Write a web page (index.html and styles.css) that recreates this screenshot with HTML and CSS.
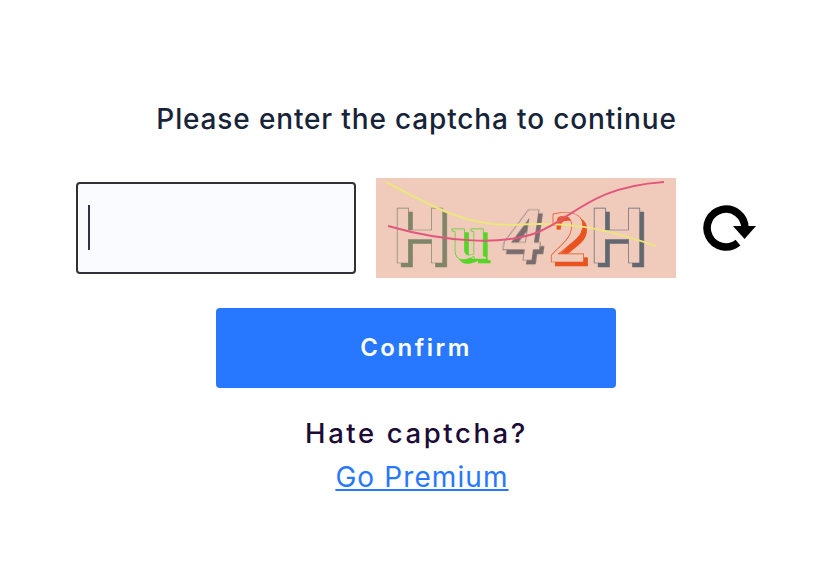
FILE: index.html
```html
<!DOCTYPE html>
<html lang="en">
<head>
<meta charset="utf-8">
<title>Captcha</title>
<link rel="stylesheet" href="styles.css">
</head>
<body>
<main class="panel">
  <h1 class="title"><span>Please enter the captcha to continue</span></h1>
  <div class="row">
    <div class="field" role="textbox"><span class="caret"></span></div>
    <svg class="captcha" width="300" height="100" viewBox="0 0 300 100">
      <text class="glyph olive" x="16" y="85" textLength="56" lengthAdjust="spacingAndGlyphs" font-size="79">H</text>
      <text class="glyph serif green" x="75" y="81" textLength="37" lengthAdjust="spacingAndGlyphs" font-size="66">u</text>
      <text class="glyph taupe" transform="translate(12) skewX(-8)" x="124" y="82" textLength="38" lengthAdjust="spacingAndGlyphs" font-size="73">4</text>
      <text class="glyph serif orange" x="172" y="84" textLength="39" lengthAdjust="spacingAndGlyphs" font-size="75">2</text>
      <text class="glyph slate" x="213" y="85" textLength="56" lengthAdjust="spacingAndGlyphs" font-size="79">H</text>
      <path class="line yellow" d="M10 4C60 31 93 48 136 47C190 43 225 49 280 68"/>
      <path class="line pink" d="M12 48C72 65 127 67 160 55C198 40 214 9 288 4"/>
    </svg>
    <svg class="refresh" width="56" height="50" viewBox="0 0 56 50">
      <path d="M44.9 25A18.9 18.9 0 1 0 38 39.6" fill="none" stroke="#000" stroke-width="7.6"/>
      <path d="M33 23h23L44.5 36z"/>
    </svg>
  </div>
  <button class="confirm"><span>Confirm</span></button>
  <p class="hate"><span>Hate captcha?</span></p>
  <a class="premium">Go Premium</a>
</main>
</body>
</html>
```
FILE: styles.css
```css
body { margin: 0; background: #fff; font-family: Inter, "Open Sans", sans-serif; }
.panel { height: 562px; padding: 99px 66px 0 76px; box-sizing: border-box; display: flex; flex-direction: column; }
.title { margin: 0; width: 681px; height: 40px; line-height: 40px; text-align: center; font-size: 28px; font-weight: 500; letter-spacing: 0.85px; color: #172338; white-space: nowrap; }
.row { margin-top: 39px; height: 100px; display: flex; align-items: center; }
.field { width: 280px; height: 92px; box-sizing: border-box; border: 2px solid #303036; border-radius: 4px; background: #fafbfe; padding-left: 10px; display: flex; align-items: center; }
.caret { width: 2px; height: 45px; margin-bottom: 1px; background: #32304f; }
.captcha { margin-left: 20px; background: #f0cbbc; font-family: "Liberation Sans", sans-serif; font-weight: 700; }
.serif { font-family: "Liberation Serif", serif; }
.refresh { margin-left: 24px; }
.glyph { fill: #f0cbbc; stroke: currentColor; stroke-width: 0.7; filter: drop-shadow(4px 4px 0 currentColor); }
.olive { color: #80856a; }
.green { color: #56d528; }
.taupe { color: #786d6c; }
.orange { color: #e95320; }
.slate { color: #626870; }
.line { fill: none; stroke-width: 2; }
.yellow { stroke: #ece57f; }
.pink { stroke: #e2577c; }
.confirm { margin: 30px 0 0 140px; padding: 0; width: 400px; height: 80px; flex-shrink: 0; border: 0; border-radius: 4px; background: #2878ff; color: #fff; font: 600 24px/80px Inter, sans-serif; letter-spacing: 2.5px; }
.hate { margin: 25px 0 0; width: 681px; line-height: 41px; text-align: center; font-size: 27.5px; font-weight: 500; letter-spacing: 2.6px; color: #1b0b36; }
.premium { margin-top: 4px; width: 692px; line-height: 39px; text-align: center; font-size: 28px; letter-spacing: 1.1px; color: #2878ff; text-decoration: underline; text-decoration-thickness: 2px; text-underline-offset: 2px; text-decoration-skip-ink: none; }
```
